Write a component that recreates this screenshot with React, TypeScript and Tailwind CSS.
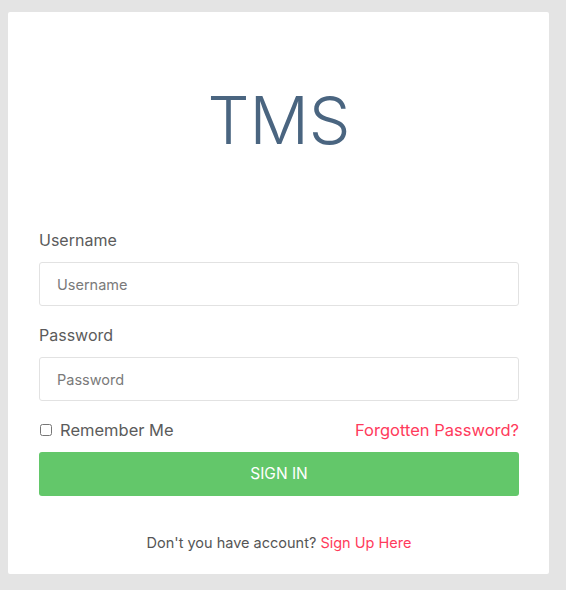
export default function App() {
  return (
    <div className="min-h-[590px] bg-[#e4e4e4] pl-2 pt-3 font-['Inter',sans-serif]">
      <div className="h-[562px] w-[541px] rounded-[2px] bg-white pl-[31px] pr-[30px]">
        <h1 className="pt-[72px] text-center text-[66px] font-light leading-[72px] text-[#4a6580]">
          TMS
        </h1>

        <form className="mt-[74px]">
          <label className="block text-[16px] leading-5 text-[#5b5b5b]">Username</label>
          <input
            type="text"
            placeholder="Username"
            className="mt-[12px] h-[44px] w-full rounded-[3px] border border-[#e2e2e2] px-[17px] text-[14.5px] text-[#555] outline-none placeholder:text-[#7a7a7a]"
          />

          <label className="mt-[19px] block text-[16px] leading-5 text-[#5b5b5b]">Password</label>
          <input
            type="password"
            placeholder="Password"
            className="mt-[12px] h-[44px] w-full rounded-[3px] border border-[#e2e2e2] px-[17px] text-[14.5px] text-[#555] outline-none placeholder:text-[#7a7a7a]"
          />

          <div className="mt-[19px] flex items-center justify-between">
            <label className="flex items-center gap-[8px] text-[16.5px] leading-5 text-[#5b5b5b]">
              <input type="checkbox" className="ml-[1px] h-[12px] w-[12px]" />
              Remember Me
            </label>
            <a href="#" className="text-[16.5px] leading-5 text-[#ff3b5c]">
              Forgotten Password?
            </a>
          </div>

          <button
            type="button"
            className="mt-[12px] h-[44px] w-full rounded-[3px] bg-[#63c76a] text-[15.5px] text-white"
          >
            SIGN IN
          </button>

          <p className="mt-[37px] text-center text-[14.5px] leading-5 text-[#555]">
            Don't you have account? <a href="#" className="text-[#ff3b5c]">Sign Up Here</a>
          </p>
        </form>
      </div>
    </div>
  );
}
